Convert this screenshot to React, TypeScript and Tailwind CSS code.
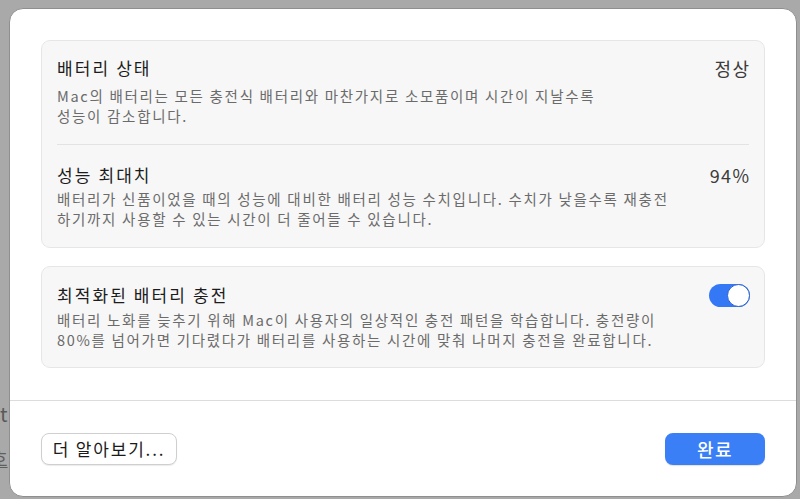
import React from "react";

const font = { fontFamily: '"Noto Sans CJK KR", "Noto Sans", sans-serif' };

function Title({ children }: { children: React.ReactNode }) {
  return <span className="text-[17px] leading-[22px] tracking-[2.1px] text-[#1c1c1c]">{children}</span>;
}

function Value({ children }: { children: React.ReactNode }) {
  return <span className="text-[18px] leading-[22px] tracking-[1.4px] mr-[-1.4px] text-[#3c3c3c]">{children}</span>;
}

function Desc({ children, className = "" }: { children: React.ReactNode; className?: string }) {
  return (
    <p className={`text-[14.5px] leading-[20px] tracking-[1.7px] text-[#6b6b6b] whitespace-nowrap ${className}`}>
      {children}
    </p>
  );
}

export default function App() {
  return (
    <div
      className="relative w-[800px] h-[499px] overflow-hidden bg-[#a9a9a9] pt-[8px] pl-[9px] pr-[3px] pb-[2px]"
      style={font}
    >
      {/* desktop content peeking behind the sheet */}
      <span className="absolute left-[0px] top-[402px] text-[20px] leading-[24px] text-[#5a5a5a]">t</span>
      <span className="absolute left-[-9px] top-[447px] text-[18px] leading-[22px] text-[#5f5f5f] underline">호</span>

      <div className="relative z-10 w-[788px] h-[489px] bg-white rounded-[14px] border border-[#8f8f8f] flex flex-col overflow-hidden">
        <div className="px-[31px] pt-[31px] flex flex-col">
          {/* Card 1 */}
          <div className="h-[208px] bg-[#f7f7f7] border border-[#e6e6e6] rounded-[9px] px-[15px] flex flex-col">
            <div className="pt-[16px] flex flex-col border-b border-[#e3e3e3] h-[104px]">
              <div className="flex justify-between items-center h-[22px]">
                <Title>배터리 상태</Title>
                <Value>정상</Value>
              </div>
              <Desc className="mt-[7px]">
                Mac의 배터리는 모든 충전식 배터리와 마찬가지로 소모품이며 시간이 지날수록
                <br />
                성능이 감소합니다.
              </Desc>
            </div>
            <div className="pt-[19px] flex flex-col">
              <div className="flex justify-between items-center h-[22px]">
                <Title>성능 최대치</Title>
                <Value>94%</Value>
              </div>
              <Desc className="mt-[3px]">
                배터리가 신품이었을 때의 성능에 대비한 배터리 성능 수치입니다. 수치가 낮을수록 재충전
                <br />
                하기까지 사용할 수 있는 시간이 더 줄어들 수 있습니다.
              </Desc>
            </div>
          </div>

          {/* Card 2 */}
          <div className="mt-[18px] h-[102px] bg-[#f7f7f7] border border-[#e6e6e6] rounded-[9px] px-[15px] pt-[17px] flex flex-col">
            <div className="flex justify-between items-center h-[22px]">
              <Title>최적화된 배터리 충전</Title>
              <div className="w-[41px] h-[23px] rounded-full bg-[#3578f6] relative mr-[-1px]">
                <div className="absolute right-0 top-0 w-[23px] h-[23px] rounded-full bg-white border border-[#2a5fd0]" />
              </div>
            </div>
            <Desc className="mt-[4px]">
              배터리 노화를 늦추기 위해 Mac이 사용자의 일상적인 충전 패턴을 학습합니다. 충전량이
              <br />
              80%를 넘어가면 기다렸다가 배터리를 사용하는 시간에 맞춰 나머지 충전을 완료합니다.
            </Desc>
          </div>
        </div>

        <div className="mt-[32px] border-t border-[#dcdcdc]" />

        <div className="px-[31px] pt-[32px] flex justify-between items-start">
          <button className="h-[32px] w-[136px] bg-white border border-[#cfcfcf] rounded-[8px] shadow-[0_1px_1px_rgba(0,0,0,0.08)] text-[17px] tracking-[1.8px] text-[#1a1a1a] flex items-center justify-center">
            더 알아보기...
          </button>
          <button className="h-[32px] w-[100px] rounded-[8px] bg-[#3a7ff6] text-white text-[18px] tracking-[1.5px] font-medium flex items-center justify-center shadow-[0_1px_1px_rgba(0,0,0,0.12)]">
            완료
          </button>
        </div>
      </div>
    </div>
  );
}
